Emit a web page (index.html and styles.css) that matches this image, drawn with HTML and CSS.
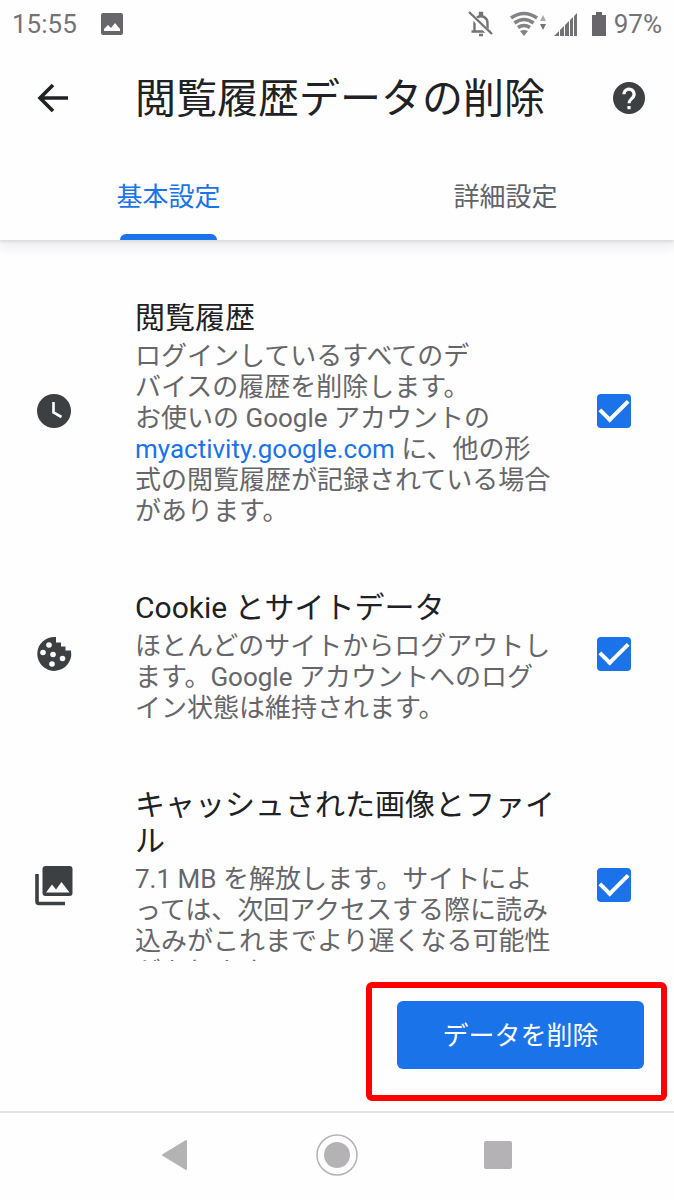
FILE: index.html
```html
<!DOCTYPE html>
<html lang="ja">
<head>
  <meta charset="UTF-8">
  <meta name="viewport" content="width=device-width, initial-scale=1">
  <title>閲覧履歴データの削除</title>
  <link rel="stylesheet" href="styles.css">
</head>
<body>
  <div class="status">
    <span>15:55</span>
    <svg class="status-photo" width="22" height="22" viewBox="0 0 22 22"><rect width="22" height="22" rx="2" fill="#68666a"/><path d="M3 18v-2l4-4 3 3 4-5 5 6v2z" fill="#fff"/></svg>
    <div class="status-icons">
      <svg width="26" height="26" viewBox="0 0 26 26" fill="none" stroke="#747276" stroke-width="2.400"><path d="M6.500 20V12q0-6 6.500-7 6.500 1 6.500 7v8M3.500 20.500h19"/><path d="M12 5V2h2v3zM11 24h4" fill="#747276"/><path d="M2 3l22 22" stroke="#fff" stroke-width="5"/><path d="M1 1l23 22"/></svg>
      <svg class="status-wifi" width="37" height="24" viewBox="0 0 37 24"><g fill="none" stroke="#848286" stroke-width="3.600"><path d="M1 6q13-9 26 0M4.500 11q9.500-7 19 0M8 15.500q6-4 12 0"/></g><path d="M10 19q4-2 8 0l-4 5z" fill="#848286"/><path d="M30 9l3-6 3 6z" fill="#aaa8ab"/><path d="M30 12l3 6 3-6z" fill="#747276"/></svg>
      <svg class="status-signal" width="23" height="23" viewBox="0 0 23 23" fill="#747276"><path d="M0 23l5-5v5zM6 23v-6l4-4v10zM11 23V12l4-4v15zM16 23V7l3-3v19zM20 23V3l3-3v23z"/></svg>
      <svg class="status-battery" width="14" height="24" viewBox="0 0 14 24"><path d="M4 0h6v3h4v21H0V3h4z" fill="#68666a"/></svg>
      <span>97%</span>
    </div>
  </div>

  <header class="header">
    <button class="icon-btn" aria-label="戻る">
      <svg width="32" height="32" viewBox="0 0 32 32" fill="none" stroke="#202124" stroke-width="3.600"><path d="M31 16H3M16 3L3 16l13 13"/></svg>
    </button>
    <h1>閲覧履歴データの削除</h1>
    <button class="icon-btn" aria-label="ヘルプ">
      <svg width="32" height="32" viewBox="0 0 24 24"><path fill="#3c4043" d="M12 0a12 12 0 1 0 0 24 12 12 0 0 0 0-24z"/><path d="M8.200 9.200a3.800 3.800 0 1 1 6.400 2.700C13 13.400 12 14 12 16" fill="none" stroke="#fff" stroke-width="2.400"/><path d="M10.800 18h2.400v2.400h-2.400z" fill="#fff"/></svg>
    </button>
  </header>

  <nav class="tabs">
    <button class="tab active">基本設定</button>
    <button class="tab">詳細設定</button>
  </nav>

  <main class="list">
    <div class="item">
      <svg class="item-icon" viewBox="0 0 34 34"><circle cx="17" cy="17" r="17" fill="#3c4043"/><path d="M16.500 8v10.500l8 4.500" fill="none" stroke="#fff" stroke-width="2.600"/></svg>
      <div class="item-text">
        <h2><label for="history">閲覧履歴</label></h2>
        <p>ログインしているすべてのデ<br>バイスの履歴を削除します。<br>お使いの Google アカウントの<br><a href="#">myactivity.google.com</a> に、他の形<br>式の閲覧履歴が記録されている場合<br>があります。</p>
      </div>
      <input type="checkbox" id="history" checked>
    </div>

    <div class="item">
      <svg class="item-icon" viewBox="0 0 34 34"><path fill="#3c4043" d="M19 0A17 17 0 1 0 34 14V13.500H28.500V9.500H24V5.500H19z"/><g fill="#fff"><circle cx="12" cy="8" r="2.800"/><circle cx="6" cy="15.500" r="2.800"/><circle cx="16" cy="17.500" r="2.800"/><circle cx="25.500" cy="21.500" r="2.800"/><circle cx="15" cy="27" r="2.800"/></g></svg>
      <div class="item-text">
        <h2><label for="cookie">Cookie とサイトデータ</label></h2>
        <p>ほとんどのサイトからログアウトします。Google アカウントへのログイン状態は維持されます。</p>
      </div>
      <input type="checkbox" id="cookie" checked>
    </div>

    <div class="item">
      <svg class="item-icon" viewBox="0 0 34 34"><path d="M0 6v27.500q0 2 2 2h26" fill="none" stroke="#3c4043" stroke-width="3.600"/><rect x="5.500" y="-2" width="30" height="30" rx="3" fill="#3c4043"/><path d="M9 24.500l6-8 4 5 5.500-7.500 8 10.500z" fill="#fff"/></svg>
      <div class="item-text">
        <h2><label for="cache">キャッシュされた画像とファイル</label></h2>
        <p>7.1 MB を解放します。サイトによ<br>っては、次回アクセスする際に読み込みがこれまでより遅くなる可能性があります。</p>
      </div>
      <input type="checkbox" id="cache" checked>
    </div>
  </main>

  <footer class="footer">
    <div class="highlight">
      <button class="clear-btn">データを削除</button>
    </div>
  </footer>

  <div class="sysnav">
    <button class="icon-btn" aria-label="前の画面"><svg width="42" height="42" viewBox="0 0 42 42"><path d="M8 21L31 7v28z" fill="#b4b2b5" stroke="#b4b2b5" stroke-width="2" stroke-linejoin="round"/></svg></button>
    <button class="icon-btn" aria-label="ホーム"><svg width="42" height="42" viewBox="0 0 42 42"><circle cx="21" cy="21" r="20" fill="none" stroke="#b4b2b5" stroke-width="1.500"/><circle cx="21" cy="21" r="13" fill="#b4b2b5"/></svg></button>
    <button class="icon-btn" aria-label="アプリ履歴"><svg width="42" height="42" viewBox="0 0 42 42"><rect x="7" y="7" width="28" height="28" rx="2" fill="#b4b2b5"/></svg></button>
  </div>
</body>
</html>
```
FILE: styles.css
```css
* { box-sizing: border-box; }
body { margin: 0; height: 100vh; display: flex; flex-direction: column; background: #fefefe; color: #202124; font-family: Roboto, "Noto Sans CJK JP", sans-serif; }
button { font-family: inherit; border: none; background: none; padding: 0; cursor: pointer; }
svg { display: block; overflow: visible; }
h1, h2, p { margin: 0; font-weight: normal; }

/* status bar */
.status { display: flex; align-items: center; height: 48px; padding: 0 12px; font-size: 26px; line-height: 48px; color: #747276; }
.status-photo { margin-left: 24px; }
.status-icons { display: flex; align-items: center; margin-left: auto; }
.status-wifi { margin-left: 16px; }
.status-signal { margin-left: 7px; }
.status-battery { margin: 0 8px 0 15px; }

/* title and tabs */
.header { display: flex; align-items: center; height: 100px; padding: 0 29px 0 37px; position: relative; z-index: 1; background: #fefefe; }
.header h1 { flex: 1; margin-left: 66px; padding-top: 2px; font-size: 41px; line-height: 60px; }
.tabs { display: flex; height: 92px; flex-shrink: 0; box-shadow: 0 2px 2px #dddcdf, 0 6px 12px #e8e6ea; }
.tab { flex: 1; display: flex; flex-direction: column; align-items: center; justify-content: space-between; padding-top: 31px; font-size: 26px; line-height: 36px; color: #5f6368; }
.tab.active { color: #1a73e8; }
.tab.active::after { content: ""; width: 97px; height: 6px; border-radius: 6px 6px 0 0; background: #1a73e8; }

/* list */
.list { flex: 1; min-height: 0; overflow: hidden; padding-top: 25px; }
.item { display: flex; align-items: center; padding: 29px 43px 28px 37px; }
.item-icon { width: 34px; height: 34px; flex-shrink: 0; }
.item-text { flex: 1; margin: 0 40px 0 64px; padding-top: 6px; }
.item h2 { font-size: 30px; line-height: 36px; margin-bottom: 5px; }
.item p { font-size: 26px; line-height: 31px; color: #66666a; }
.item a { color: #1a73e8; text-decoration: none; }
.item input { appearance: none; flex-shrink: 0; display: flex; align-items: center; justify-content: center; width: 34px; height: 34px; margin: 0; border-radius: 4px; background: #c4c7c5; }
.item input:checked { background: #1a73e8; }
.item input:checked::after { content: ""; width: 12px; height: 24px; margin-bottom: 8px; border: solid #fff; border-width: 0 4px 4px 0; transform: rotate(45deg); }

/* bottom */
.footer { display: flex; justify-content: flex-end; padding: 21px 7px 10px; }
.highlight { padding: 13px 17px 26px 25px; border: 6px solid #f00; border-radius: 6px; }
.clear-btn { width: 247px; height: 68px; padding-bottom: 4px; border-radius: 6px; background: #1a73e8; color: #fff; font-size: 26px; }
.sysnav { display: flex; justify-content: center; gap: 119px; height: 89px; padding-top: 21px; border-top: 2px solid #e2e1e3; }
.icon-btn { display: block; flex-shrink: 0; }
.sysnav .icon-btn { height: 42px; }
```
